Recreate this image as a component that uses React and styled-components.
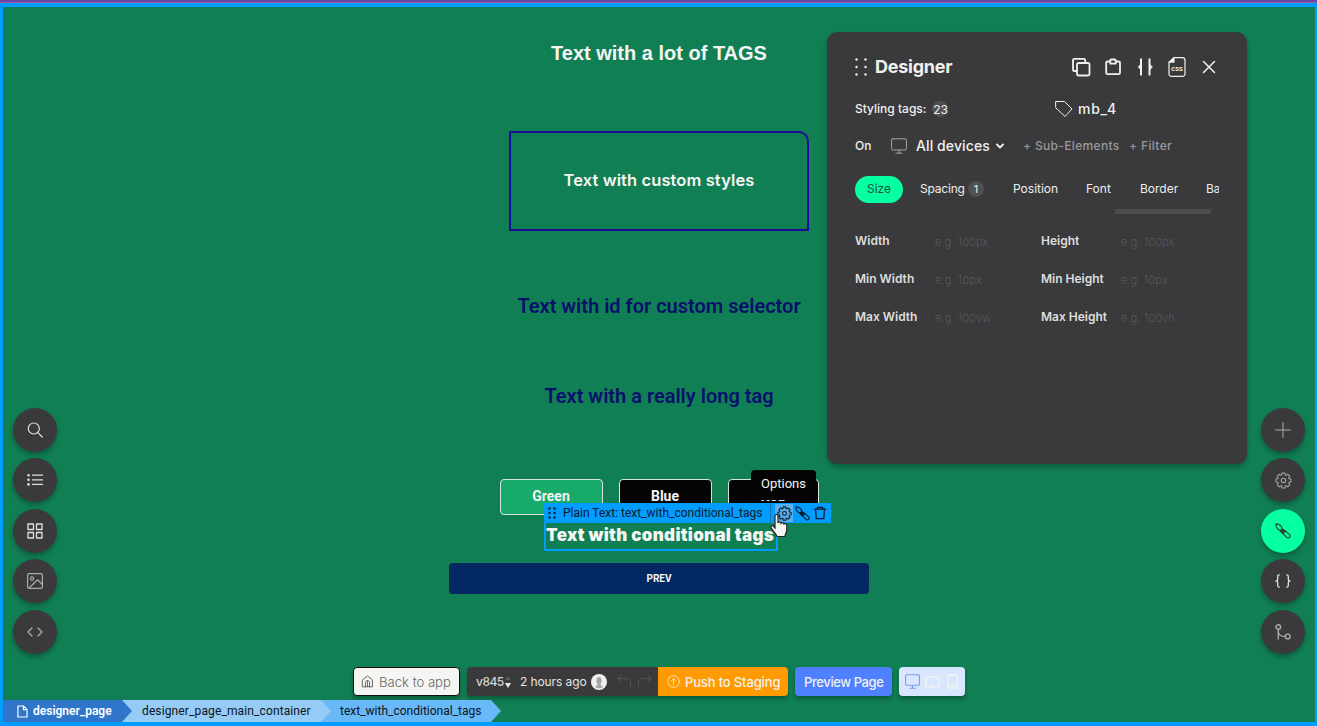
import React from "react";
import styled, { createGlobalStyle, css } from "styled-components";

const Global = createGlobalStyle`
  * { box-sizing: border-box; }
  body { margin: 0; background: #6f42a5; overflow: hidden; }
  h2 { margin: 0; }
  svg { display: block; flex: none; }
`;

const ui = css`font-family: Inter, "Work Sans", sans-serif;`;

const Screen = styled.div`
  position: relative;
  width: 1317px;
  height: 726px;
  padding-top: 3px;
  background: linear-gradient(#6f42a5 2px, #8a62b0 2px);
  overflow: hidden;
  white-space: nowrap;
`;

const Canvas = styled.main`
  height: 723px;
  border: solid #009dff;
  border-width: 4px 2px 4px 3px;
  background: #117f54;
  display: flex;
  flex-direction: column;
  align-items: center;
`;

const Heading = styled.h2`
  font: ${(p) => p.$weight || 700} ${(p) => p.$size || 20}px / 30px ${(p) => p.$family || "Roboto"}, sans-serif;
  color: ${(p) => p.$color || "#f5f5f3"};
  letter-spacing: ${(p) => p.$ls || 0}px;
  margin-top: ${(p) => p.$top || 0}px;
`;

const StyledBox = styled.div`
  width: 300px;
  height: 100px;
  margin-top: 63px;
  padding-bottom: 2px;
  border: 2px solid #1c0b9c;
  border-top-right-radius: 10px;
  display: flex;
  align-items: center;
  justify-content: center;
`;

const ColorRow = styled.div`
  display: flex;
  gap: 16px;
  margin-top: 68px;
`;

const ColorButton = styled.button`
  width: ${(p) => p.$w}px;
  height: 36px;
  padding: 0 0 2px;
  border: 1px solid #d9e3de;
  border-radius: 4px;
  background: ${(p) => p.$bg || "#040404"};
  color: #f4f4f2;
  font: 700 14px/16px Roboto, sans-serif;
`;

const Selected = styled.div`
  position: relative;
  width: 234px;
  height: 31px;
  margin: 5px 0 0 4px;
  border: 2px solid #009dff;
`;

const ElementBar = styled.div`
  position: absolute;
  left: -2px;
  top: -19px;
  width: 287px;
  height: 20px;
  padding-left: 4px;
  background: #009dff;
  display: flex;
  align-items: center;
  color: #0b1a26;
  font: 400 12px/20px Roboto, sans-serif;
`;

const ElementName = styled.span`
  width: 208px;
  height: 20px;
  margin-left: 7px;
  border-right: 1px solid #1477b5;
`;

const BarIcon = styled.span`
  width: 18px;
  height: 18px;
  display: grid;
  place-items: center;
  margin-left: ${(p) => (p.$active ? 4 : 0)}px;
  background: ${(p) => (p.$active ? "#58aef0" : "none")};
`;

const Tooltip = styled.div`
  position: absolute;
  left: 205px;
  top: -52px;
  width: 65px;
  height: 30px;
  border-radius: 4px;
  background: #040404;
  color: #f4f4f2;
  text-align: center;
  font: 400 13px/27px Roboto, sans-serif;
`;

const Pointer = styled.svg`
  position: absolute;
  left: 223px;
  top: -9px;
`;

const PrevButton = styled.button`
  width: 420px;
  height: 31px;
  margin-top: 12px;
  border: 0;
  border-radius: 4px;
  background: #032760;
  color: #f4f4f2;
  font: 700 10px/12px Roboto, sans-serif;
`;

const Rail = styled.nav`
  position: absolute;
  top: 407.5px;
  ${(p) => p.$side}: ${(p) => (p.$side === "left" ? 13 : 12)}px;
  display: flex;
  flex-direction: column;
  gap: 6.6px;
`;

const RoundButton = styled.button`
  width: 44px;
  height: 44px;
  padding: 0;
  border: 0;
  border-radius: 50%;
  display: grid;
  place-items: center;
  background: ${(p) => (p.$active ? "#05ffa1" : "#3a3a3c")};
  color: ${(p) => (p.$active ? "#26473c" : p.$dim ? "#aaaaac" : "#e0e0e0")};
  box-shadow: 0 3px 5px rgba(0, 30, 20, 0.35);
`;

const Panel = styled.section`
  ${ui}
  position: absolute;
  left: 827px;
  top: 32px;
  width: 420px;
  height: 432px;
  padding: 20px 28px;
  border-radius: 10px;
  background: #3a3a3c;
  box-shadow: 0 3px 5px rgba(0, 30, 20, 0.35);
  color: #f0f0ee;
`;

const PanelHeader = styled.header`
  display: flex;
  align-items: center;
  height: 30px;
`;

const Title = styled.span`
  flex: 1;
  margin-left: 8px;
  font: 700 18px/30px Inter, sans-serif;
  letter-spacing: -0.25px;
`;

const HeaderTools = styled.div`
  display: flex;
  gap: 8px;
  margin-right: -2px;
`;

const PanelRow = styled.div`
  display: flex;
  align-items: center;
  height: 24px;
  margin-top: ${(p) => p.$top}px;
`;

const Label = styled.span`
  font-size: ${(p) => p.$size || 12}px;
  font-weight: ${(p) => p.$weight || 500};
  line-height: 20px;
  letter-spacing: ${(p) => p.$ls || 0}px;
  color: ${(p) => p.$color || "inherit"};
  margin-left: ${(p) => p.$left || 0}px;
`;

const Cell = styled.div`
  width: ${(p) => p.$w}px;
  display: flex;
  align-items: center;
`;

const Count = styled.span`
  width: 16px;
  height: 16px;
  margin-left: ${(p) => p.$left}px;
  border-radius: 8px;
  background: #505052;
  display: inline-flex;
  align-items: center;
  justify-content: center;
  font-size: ${(p) => p.$size || 12}px;
  letter-spacing: -0.3px;
`;

const Tabs = styled.div`
  display: flex;
  gap: 5px;
  width: 364px;
  margin-top: 18px;
  overflow: hidden;
`;

const Tab = styled.span`
  flex: none;
  width: ${(p) => p.$w}px;
  height: 27px;
  padding: 0 0 2px 12px;
  border-radius: 14px;
  display: flex;
  align-items: center;
  font-size: 12px;
  font-weight: 400;
  letter-spacing: ${(p) => p.$ls || 0}px;
  background: ${(p) => (p.$active ? "#05ffa1" : "none")};
  color: ${(p) => (p.$active ? "#17543d" : "#eeeeec")};
`;

const ScrollThumb = styled.div`
  width: 96px;
  height: 5px;
  margin: 6px 0 0 260px;
  background: #4e4e50;
`;

const Fields = styled.div`
  display: grid;
  grid-template-columns: 80px 106px 80px 90px;
  grid-auto-rows: 38px;
  align-items: center;
  margin-top: 8px;
`;

const Hint = styled.span`
  padding-top: 2px;
  font-size: 11px;
  font-weight: 200;
  letter-spacing: 0.2px;
  color: #656567;
`;

const Toolbar = styled.div`
  ${ui}
  position: absolute;
  left: 353px;
  bottom: 30px;
  height: 29px;
  display: flex;
  gap: 7px;
  color: #f1f1ef;
`;

const Block = styled.div`
  width: ${(p) => p.$w}px;
  height: 29px;
  padding-left: ${(p) => p.$pad || 0}px;
  display: flex;
  align-items: center;
  border-radius: 4px;
  border: ${(p) => p.$border || "0"};
  background: ${(p) => p.$bg};
  box-shadow: 0 3px 4px rgba(0, 30, 20, 0.35);
  overflow: hidden;
`;

const Push = styled.span`
  width: 130px;
  height: 29px;
  padding-left: 9px;
  display: flex;
  align-items: center;
  margin-left: auto;
  background: #ff9b00;
`;

const Crumbs = styled.nav`
  position: absolute;
  left: 3px;
  bottom: 4px;
  display: flex;
`;

const Crumb = styled.span`
  position: relative;
  z-index: ${(p) => p.$z};
  width: ${(p) => p.$w}px;
  height: 22px;
  margin-right: -20px;
  padding-left: ${(p) => p.$pad}px;
  display: flex;
  align-items: center;
  gap: 5px;
  background: ${(p) => p.$bg};
  color: ${(p) => p.$color || "#0a1420"};
  clip-path: polygon(0 0, calc(100% - 10px) 0, 100% 50%, calc(100% - 10px) 100%, 0 100%);
  font: ${(p) => p.$weight || 400} 12px/22px Roboto, sans-serif;
  letter-spacing: ${(p) => p.$ls || 0}px;
`;

const Spaced = styled.svg`
  margin-left: ${(p) => p.$gap}px;
`;

const Icon = ({ size = 16, h, box = "0 0 16 16", sw = 1, color = "currentColor", gap = 0, children }) => (
  <Spaced width={size} height={h || size} viewBox={box} fill="none" stroke={color} strokeWidth={sw} strokeLinecap="round" strokeLinejoin="round" $gap={gap}>
    {children}
  </Spaced>
);

// Eight-toothed cog outline: each tooth is a pair of outer points between two inner ones.
const gearPath = Array.from({ length: 8 }, (_, i) =>
  [[-0.3, 5.5], [-0.2, 7.2], [0.2, 7.2], [0.3, 5.5]]
    .map(([d, r]) => {
      const a = (i * Math.PI) / 4 + d;
      return `${(8 + r * Math.sin(a)).toFixed(2)} ${(8 - r * Math.cos(a)).toFixed(2)}`;
    })
    .join("L")
).join("L");
const Gear = ({ sw, size }) => (
  <Icon sw={sw} size={size}><path d={`M${gearPath}Z`} /><circle cx="8" cy="8" r="2.1" /></Icon>
);
const Brush = ({ size, sw = 1.2 }) => (
  <Icon size={size} sw={sw}>
    <path d="M.8.8C4.200 1 6.800 2.800 7.300 6L5.600 7.800C2.400 6.800 1 4.400.8.8Z" />
    <path d="M7.300 5.800l3 2.200-2.400 2.600-2.700-2.600z" fill="currentColor" />
    <path d="M10.300 8l4.300 3.600c1.600 1.500-.8 4.200-2.500 3L7.900 10.600" />
  </Icon>
);
const Monitor = ({ size = 16, color, sw, gap }) => (
  <Icon size={size} color={color} sw={sw} gap={gap}><rect x=".6" y=".8" width="14.800" height="11.200" rx="1.200" /><path d="M8 12v3M5 15.200h6" /></Icon>
);
const Dots = ({ w, h, r, color }) => (
  <svg width={w} height={h} viewBox={`0 0 ${w} ${h}`} fill={color}>
    {[0, 1].map((c) => [0, 1, 2].map((row) => (
      <circle key={`${c}${row}`} cx={c ? w - r - 0.3 : r + 0.3} cy={r + 0.3 + (row * (h - 2 * r - 0.6)) / 2} r={r} />
    )))}
  </svg>
);

const rows = [
  ["Width", "e.g. 100px", "Height", "e.g. 100px"],
  ["Min Width", "e.g. 10px", "Min Height", "e.g. 10px"],
  ["Max Width", "e.g. 100vw", "Max Height", "e.g. 100vh"],
];

function DesignerPanel() {
  return (
    <Panel>
      <PanelHeader>
        <Dots w={12} h={18} r={1.2} color="#f2f2f0" />
        <Title>Designer</Title>
        <HeaderTools>
          <Icon size={24} box="0 0 24 24" sw={1.8}><rect x="8" y="8" width="12.500" height="12.500" rx="1.500" /><path d="M7.500 16H5.300a1.300 1.300 0 0 1-1.300-1.300V5.300A1.500 1.500 0 0 1 5.500 3.800h9.200A1.500 1.500 0 0 1 16.200 5.300v2.200" /></Icon>
          <Icon size={24} box="0 0 24 24" sw={1.8}><path d="M9 6.500H6.500A1.300 1.300 0 0 0 5.200 7.800v9.900A1.500 1.500 0 0 0 6.700 19.200h10.800a1.500 1.500 0 0 0 1.500-1.500V7.800a1.300 1.300 0 0 0-1.300-1.300H15" /><path d="M9.300 5.500a1 1 0 0 1 1-1h3.400a1 1 0 0 1 1 1v3.200H9.300z" /></Icon>
          <Icon size={24} box="0 0 24 24" sw={2}><path d="M8 3.500v17M16.500 3.500v17" strokeLinecap="butt" /><path d="M7.500 9.300L4.900 12l2.600 2.700zM17 9.300l2.600 2.700-2.600 2.700z" fill="currentColor" strokeWidth=".3" /></Icon>
          <Icon size={24} box="0 0 24 24" sw={1.2}>
            <path d="M9 2.600h8.500a2.500 2.500 0 0 1 2.500 2.500v13.800a2.500 2.500 0 0 1-2.500 2.500h-11A2.500 2.500 0 0 1 4 18.900V7.500z" />
            <path d="M9 2.600v4.500H4z" fill="currentColor" />
            <text x="12" y="15.600" textAnchor="middle" fontSize="6" fontWeight="700" fontFamily="Roboto" fill="currentColor" stroke="none">CSS</text>
          </Icon>
          <Icon size={24} box="0 0 24 24" sw={1.5}><path d="M6.500 6.500l11 11M17.500 6.500l-11 11" /></Icon>
        </HeaderTools>
      </PanelHeader>
      <PanelRow $top={15}>
        <Cell $w={200}><Label>Styling tags:</Label><Count $left={6}>23</Count></Cell>
        <Icon size={18} box="0 0 18 18"><path d="M1 1.500h8.500l7.500 7.500-7 7.500-9-8.500z" /></Icon>
        <Label $size={14} $left={5} $ls={0.7}>mb_4</Label>
      </PanelRow>
      <PanelRow $top={13}>
        <Cell $w={36}><Label>On</Label></Cell>
        <Cell $w={132}>
          <Monitor color="#a5a5a7" />
          <Label $size={14} $left={9} $ls={0.1}>All devices</Label>
          <Icon size={8} box="0 0 8 8" sw={1.8} gap={6}><path d="M1 2.500l3 3 3-3" /></Icon>
        </Cell>
        <Cell $w={106}><Label $color="#99999b" $ls={0.34}>+ Sub-Elements</Label></Cell>
        <Label $color="#99999b" $ls={0.37}>+ Filter</Label>
      </PanelRow>
      <Tabs>
        <Tab $w={48} $active>Size</Tab>
        <Tab $w={88} $ls={-0.2}>Spacing<Count $left={3} $size={11}>1</Count></Tab>
        <Tab $w={68}>Position</Tab>
        <Tab $w={49}>Font</Tab>
        <Tab $w={61}>Border</Tab>
        <Tab $w={90}>Background</Tab>
      </Tabs>
      <ScrollThumb />
      <Fields>
        {rows.map(([a, b, c, d]) => (
          <React.Fragment key={a}>
            <Label $weight={600} $color="#dededc">{a}</Label><Hint>{b}</Hint>
            <Label $weight={600} $color="#dededc">{c}</Label><Hint>{d}</Hint>
          </React.Fragment>
        ))}
      </Fields>
    </Panel>
  );
}

export default function App() {
  return (
    <Screen>
      <Global />
      <Canvas>
        <Heading $top={31} $size={20} $family="'Liberation Sans'">Text with a lot of TAGS</Heading>
        <StyledBox><Heading $size={16.5} $weight={600} $ls={0.1} $family="Inter">Text with custom styles</Heading></StyledBox>
        <Heading $top={60} $weight={600} $color="#07116b">Text with id for custom selector</Heading>
        <Heading $top={60} $weight={600} $color="#07116b">Text with a really long tag</Heading>
        <ColorRow>
          <ColorButton $w={103} $bg="#18aa6b">Green</ColorButton>
          <ColorButton $w={93}>Blue</ColorButton>
          <ColorButton $w={91}>Red</ColorButton>
        </ColorRow>
        <Selected>
          <Heading $size={17} $weight={900} $ls={0.3} $family="Inter" $top={-2}>Text with conditional tags</Heading>
          <Tooltip>Options</Tooltip>
          <ElementBar>
            <Dots w={8} h={12} r={1.2} color="#0b1a26" />
            <ElementName>Plain Text: text_with_conditional_tags</ElementName>
            <BarIcon $active><Gear sw={1.1} size={15} /></BarIcon>
            <BarIcon><Brush size={15} /></BarIcon>
            <BarIcon><Icon size={14} sw={1.4}><path d="M1.500 3.500h13M5 3.500v-2h6v2M3 3.500l.6 11h8.800l.6-11" /></Icon></BarIcon>
          </ElementBar>
          <Pointer width="20" height="26" viewBox="0 0 20 26" fill="#f5f5f3" stroke="#222" strokeWidth="1.2">
            <path d="M6 3c0-2 3-2 3 0v7c.5-1.500 3-1.300 3 .3 1-1.200 3-.7 3 .7 1.200-1 2.800-.2 2.800 1.300v4.200c0 3-1.500 4.500-2 7H8c-.5-2.500-5-6.500-6-9-.7-1.800 1.300-2.500 2.500-1.200L6 15z" />
          </Pointer>
        </Selected>
        <PrevButton>PREV</PrevButton>
      </Canvas>

      <Rail $side="left">
        <RoundButton><Icon sw={1.2}><circle cx="6.800" cy="6.500" r="5.500" /><path d="M10.900 10.700l4.300 4.300" /></Icon></RoundButton>
        <RoundButton><Icon sw={1.2}><path d="M5.500 3.200h10M5.500 7.800h10M5.500 12.400h10" /><path d="M1.500 3.200h.01M1.500 7.800h.01M1.500 12.400h.01" strokeWidth="2.600" /></Icon></RoundButton>
        <RoundButton><Icon sw={1.3}><path d="M1 1h5.500v5.500H1zM9.500 1H15v5.500H9.500zM1 9.500h5.500V15H1zM9.500 9.500H15V15H9.500z" /></Icon></RoundButton>
        <RoundButton $dim><Icon sw={1.2}><rect x=".6" y=".6" width="14.800" height="14.800" rx="1.500" /><circle cx="5" cy="5.500" r="1.600" /><path d="M2 15L10.500 6.800l4.800 4.500" /></Icon></RoundButton>
        <RoundButton $dim><Icon sw={1.3}><path d="M5 4L1 8l4 4M11 4l4 4-4 4" /></Icon></RoundButton>
      </Rail>
      <Rail $side="right">
        <RoundButton $dim><Icon><path d="M8 .5v15M.5 8h15" /></Icon></RoundButton>
        <RoundButton $dim><Gear sw={1} size={17} /></RoundButton>
        <RoundButton $active><Brush size={16} /></RoundButton>
        <RoundButton><Icon sw={1.3}><path d="M4.300 1.800C3 1.800 2.700 2.400 2.700 3.500V6c0 1.200-.5 2-1.700 2 1.200 0 1.700.8 1.700 2v2.500c0 1.100.3 1.700 1.600 1.700M11.700 1.800c1.300 0 1.600.6 1.600 1.700V6c0 1.200.5 2 1.700 2-1.200 0-1.700.8-1.700 2v2.500c0 1.100-.3 1.700-1.600 1.700" /></Icon></RoundButton>
        <RoundButton $dim><Icon sw={1.4}><circle cx="3.300" cy="3" r="2.300" /><circle cx="12.700" cy="12.500" r="2.400" /><path d="M3.300 5.500V15M3.300 8c.5 3 3 4.500 6.900 4.500" /></Icon></RoundButton>
      </Rail>

      <DesignerPanel />

      <Toolbar>
        <Block $w={107} $bg="#f5f5f3" $border="1px solid #111" $pad={7}>
          <Icon size={13} color="#555" sw={1.1}><path d="M2 6l6-4.800L14 6v8.500H2zM5.500 14.500V9c0-3 5-3 5 0v5.500M8 8v6" /></Icon>
          <Label $size={13} $weight={300} $color="#666" $left={5} $ls={0.05}>Back to app</Label>
        </Block>
        <Block $w={321} $bg="#3a3a3c" $pad={9}>
          <Cell $w={29}><Label $color="#d4d4d2" $ls={-0.5}>v845</Label></Cell>
          <svg width="6" height="14" viewBox="0 0 6 14"><path d="M0 5l3-4 3 4z" fill="#59595b" /><path d="M0 8l3 5 3-5z" fill="#e8e8e8" /></svg>
          <Label $left={9} $weight={400} $color="#e4e4e2" $ls={-0.1}>2 hours ago</Label>
          <Icon gap={4}><circle cx="8" cy="8" r="8" fill="#efefed" stroke="none" /><path d="M4 13l2.300-1.800V9.500C5 8.300 4.700 3 8 3s3 5.300 1.700 6.500v1.700L12 13c-2 1.800-6 1.800-8 0z" fill="#a6a6a6" stroke="none" /></Icon>
          <Icon size={15} gap={10} color="#59595b"><path d="M5 1L1 5l4 4M1 5h9.500c2.500 0 4 1.500 4 4v4" /></Icon>
          <Icon size={15} gap={5} color="#59595b"><path d="M11 1l4 4-4 4M15 5H5.500c-2.500 0-4 1.500-4 4v4" /></Icon>
          <Push>
            <Icon size={13} color="#ffe2b0" sw={1.2}><circle cx="8" cy="8" r="7.200" /><path d="M8 12V4.500M5 7.500l3-3 3 3" /></Icon>
            <Label $size={13} $left={5} $ls={-0.15}>Push to Staging</Label>
          </Push>
        </Block>
        <Block $w={97} $bg="#4f80ff" $pad={9}><Label $size={13} $ls={-0.4}>Preview Page</Label></Block>
        <Block $w={66} $bg="#d8e6ff" $pad={6}>
          <Monitor size={15} color="#729af5" sw={1.1} />
          <Icon size={15} gap={5} color="#f5f3ee" sw={1.4}><rect x="1" y="3" width="14" height="11" rx="1" /><path d="M7 12h2" /></Icon>
          <Icon size={15} gap={5} color="#f5f3ee" sw={1.6}><rect x="3.500" y="1" width="9.500" height="14" rx="1" /><path d="M7 12.500h2.500M8.200 11v2" /></Icon>
        </Block>
      </Toolbar>

      <Crumbs>
        <Crumb $w={129} $z={3} $pad={14} $bg="#2f76cb" $color="#fff" $weight={600}>
          <Icon size={11} h={13} box="0 0 12 14" sw={1.3}><path d="M1 1h6l4 4v8H1zM7 1v4h4" /></Icon>
          designer_page
        </Crumb>
        <Crumb $w={219} $z={2} $pad={30} $bg="#96cbf5" $ls={0.12}>designer_page_main_container</Crumb>
        <Crumb $w={190} $z={1} $pad={29} $bg="#69b8f7">text_with_conditional_tags</Crumb>
      </Crumbs>
    </Screen>
  );
}
